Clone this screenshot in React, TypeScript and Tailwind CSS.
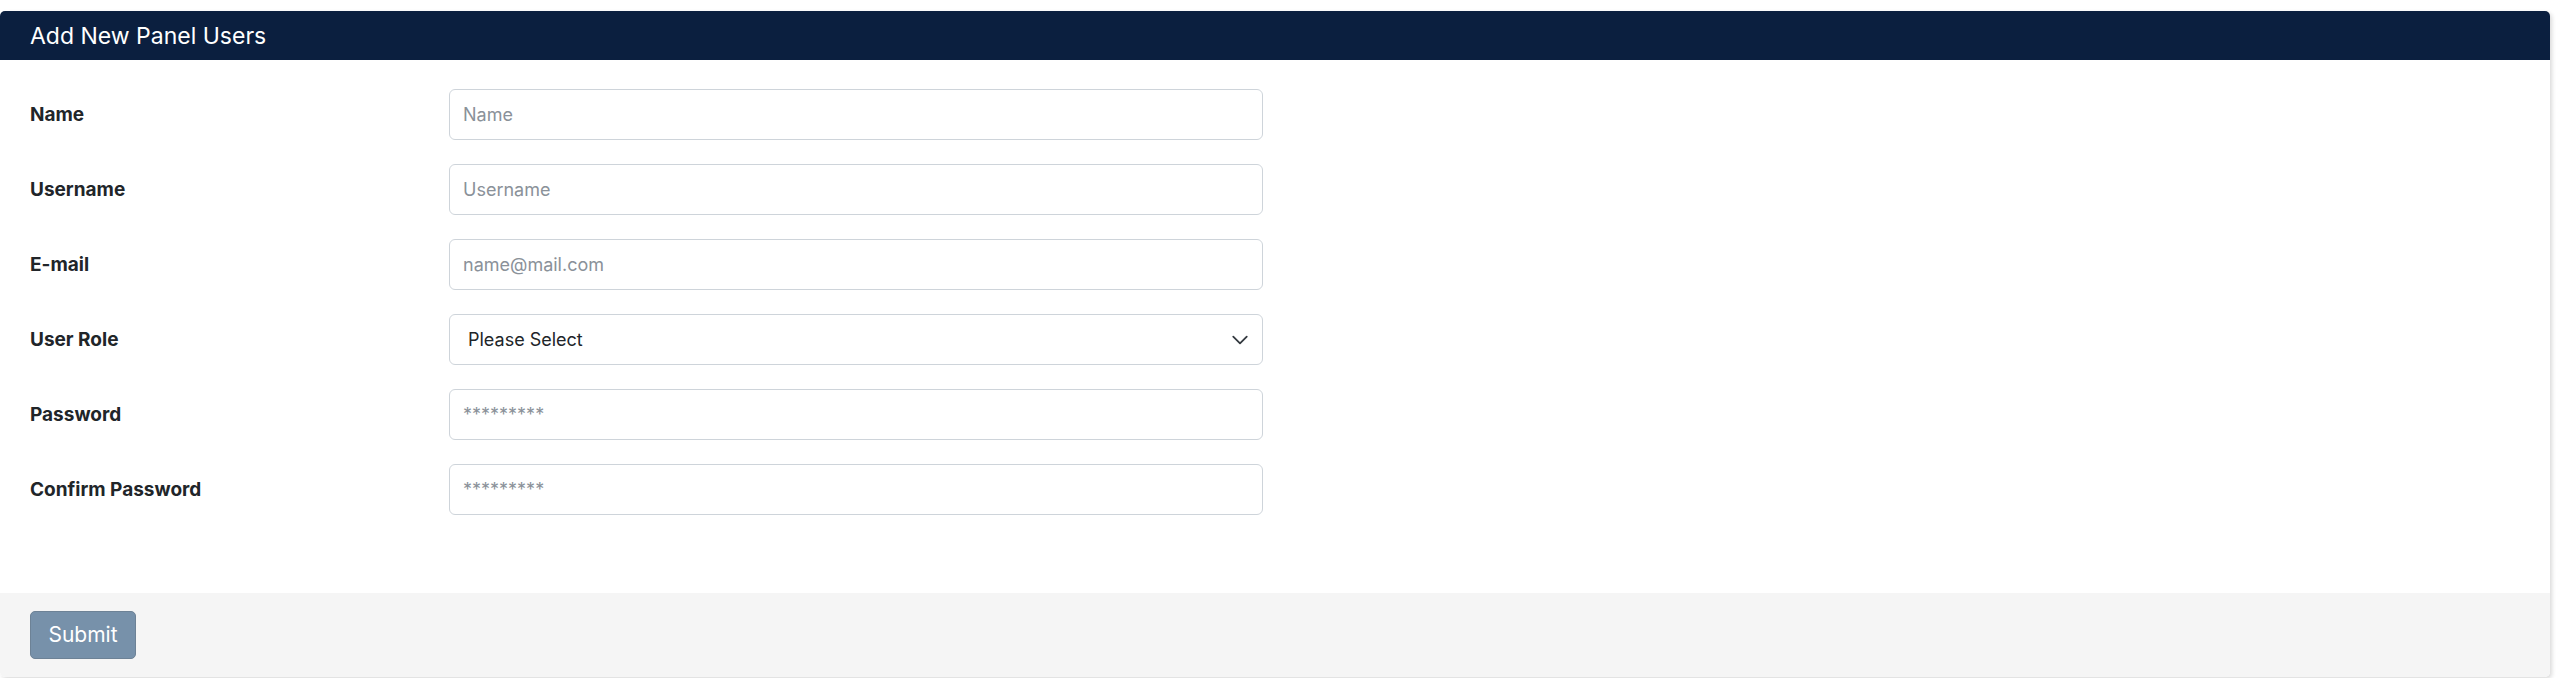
import React from "react";

const fields = [
  { label: "Name", placeholder: "Name", type: "text" },
  { label: "Username", placeholder: "Username", type: "text" },
  { label: "E-mail", placeholder: "name@mail.com", type: "email" },
  { label: "User Role", placeholder: "", type: "select" },
  { label: "Password", placeholder: "*********", type: "password" },
  { label: "Confirm Password", placeholder: "*********", type: "password" },
];

const App: React.FC = () => {
  return (
    <div
      className="w-full min-h-[678px] bg-white pt-[11px] pr-[8px]"
      style={{ fontFamily: "Inter, 'Noto Sans', sans-serif" }}
    >
      <div className="rounded-[5px] bg-white shadow-[2px_2px_4px_rgba(0,0,0,0.15)] overflow-hidden">
        {/* header */}
        <div className="bg-[#0b1f3f] h-[49px] flex items-center px-[30px] pt-[2px]">
          <h3 className="text-white text-[23px] font-normal">Add New Panel Users</h3>
        </div>

        {/* body */}
        <div className="flex flex-col gap-[24px] pt-[29px] pb-[78px] px-[30px]">
          {fields.map((f) => (
            <div key={f.label} className="flex flex-row items-center">
              <label className="w-[419px] text-[19px] font-bold text-[#212529] pt-[1px]">
                {f.label}
              </label>
              {f.type === "select" ? (
                <div className="relative w-[814px] h-[51px]">
                  <select className="appearance-none w-full h-full border border-[#ced4da] rounded-[6px] px-[18px] text-[18px] text-[#212529] bg-white outline-none">
                    <option>Please Select</option>
                  </select>
                  <svg
                    className="absolute right-[14px] top-1/2 -translate-y-1/2 pointer-events-none"
                    width="18"
                    height="18"
                    viewBox="0 0 16 16"
                    fill="none"
                    stroke="#343a40"
                    strokeWidth="1.6"
                    strokeLinecap="round"
                    strokeLinejoin="round"
                  >
                    <path d="M2 5l6 6 6-6" />
                  </svg>
                </div>
              ) : (
                <input
                  type="text"
                  placeholder={f.placeholder}
                  className="w-[814px] h-[51px] border border-[#ced4da] rounded-[6px] px-[13px] text-[18px] text-[#212529] placeholder:text-[#8a9199] outline-none"
                />
              )}
            </div>
          ))}
        </div>

        {/* footer */}
        <div className="bg-[#f5f5f5] h-[84px] flex items-center px-[30px]">
          <button className="bg-[#7791aa] border border-[#6d8296] rounded-[5px] w-[106px] h-[48px] text-white text-[21px]">
            Submit
          </button>
        </div>
      </div>
    </div>
  );
};

export default App;
